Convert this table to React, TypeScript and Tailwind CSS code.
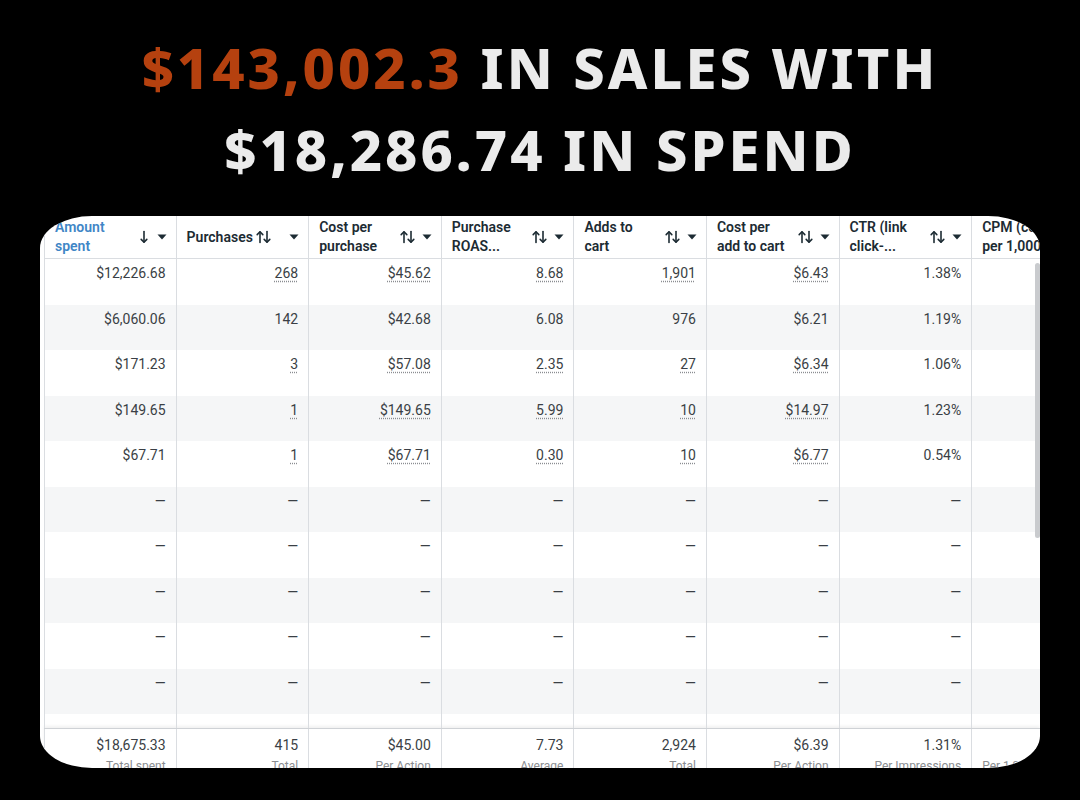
import React from 'react';

type Cell = { v: string; u?: boolean };

const columns = [
  { lines: ['Amount', 'spent'], active: true, inline: false },
  { lines: ['Purchases'], inline: true },
  { lines: ['Cost per', 'purchase'] },
  { lines: ['Purchase', 'ROAS...'] },
  { lines: ['Adds to', 'cart'] },
  { lines: ['Cost per', 'add to cart'] },
  { lines: ['CTR (link', 'click-...'] },
  { lines: ['CPM (cost', 'per 1,000...'], noIcons: true },
];

const c = (v: string, u = false): Cell => ({ v, u });

const rows: Cell[][] = [
  [c('$12,226.68'), c('268', true), c('$45.62', true), c('8.68', true), c('1,901', true), c('$6.43', true), c('1.38%'), c('')],
  [c('$6,060.06'), c('142'), c('$42.68'), c('6.08'), c('976'), c('$6.21'), c('1.19%'), c('')],
  [c('$171.23'), c('3', true), c('$57.08', true), c('2.35', true), c('27', true), c('$6.34', true), c('1.06%'), c('')],
  [c('$149.65'), c('1', true), c('$149.65', true), c('5.99', true), c('10', true), c('$14.97', true), c('1.23%'), c('')],
  [c('$67.71'), c('1', true), c('$67.71', true), c('0.30', true), c('10', true), c('$6.77', true), c('0.54%'), c('')],
  ...Array.from({ length: 5 }, () => [...Array(7).fill(c('—')), c('')]),
];

const footer = [
  ['$18,675.33', 'Total spent'],
  ['415', 'Total'],
  ['$45.00', 'Per Action'],
  ['7.73', 'Average'],
  ['2,924', 'Total'],
  ['$6.39', 'Per Action'],
  ['1.31%', 'Per Impressions'],
  ['', 'Per 1,000 Impressions'],
];

function SortArrows({ only }: { only?: boolean }) {
  return (
    <svg width="16" height="14" viewBox="0 0 16 14" fill="none" stroke="#1c2b33" strokeWidth="1.6" strokeLinecap="round" strokeLinejoin="round">
      {!only && (
        <>
          <path d="M4 12.5V2" />
          <path d="M1.2 4.6L4 1.8l2.8 2.8" />
        </>
      )}
      <path d="M11 1.5V12" />
      <path d="M8.2 9.4L11 12.2l2.8-2.8" />
    </svg>
  );
}

function Caret() {
  return (
    <svg width="10" height="6" viewBox="0 0 10 6">
      <path d="M0.5 0.5h9L5 5.5z" fill="#1c2b33" />
    </svg>
  );
}

const grid = 'grid grid-cols-[repeat(8,132.6px)]';

export default function App() {
  return (
    <div className="w-[1080px] h-[800px] bg-black overflow-hidden font-['Roboto',sans-serif]">
      <div className="h-[216px] flex flex-col items-center pt-[26px] font-['Noto_Sans',sans-serif] font-extrabold text-[56px] leading-[82px] tracking-[3px] text-[#ebebeb]">
        <div>
          <span className="text-[#b5410f]">$143,002.3</span> IN SALES WITH
        </div>
        <div>$18,286.74 IN SPEND</div>
      </div>

      <div className="relative ml-[40px] w-[1000px] h-[552px] bg-white rounded-[52px/32px] overflow-hidden pl-[4px]">
        {/* header */}
        <div className={`${grid} h-[43px] border-b border-[#dadde1]`}>
          {columns.map((col, i) => (
            <div
              key={i}
              className={`flex items-center pl-[10px] pr-[8px] border-r border-[#dadde1] ${i === 0 ? 'border-l' : ''}`}
            >
              <div
                className={`${col.inline ? '' : 'flex-1'} text-[14px] leading-[19px] font-semibold whitespace-nowrap ${
                  col.active ? 'text-[#3f86c6]' : 'text-[#1c2b33]'
                }`}
              >
                {col.lines.map((l) => (
                  <div key={l}>{l}</div>
                ))}
              </div>
              {!col.noIcons && (
                <>
                  <div className={`${col.inline ? 'ml-[3px] flex-1' : ''} ${col.active ? 'mr-[2px]' : ''}`}>
                    <SortArrows only={col.active} />
                  </div>
                  <div className="ml-[6px] mr-[1px]">
                    <Caret />
                  </div>
                </>
              )}
            </div>
          ))}
        </div>

        {/* body */}
        {rows.map((row, r) => (
          <div key={r} className={`${grid} h-[45.5px] ${r % 2 === 1 ? 'bg-[#f5f6f7]' : 'bg-white'}`}>
            {row.map((cell, i) => (
              <div
                key={i}
                className={`text-right pr-[10px] pt-[5px] text-[14px] leading-[18px] text-[#3a3f45] border-r border-[#dadde1] ${
                  i === 0 ? 'border-l' : ''
                }`}
              >
                <span className={cell.u ? 'underline decoration-dotted decoration-[#8a8d91] underline-offset-[3px]' : ''}>
                  {cell.v}
                </span>
              </div>
            ))}
          </div>
        ))}
        <div className={`${grid} h-[14px]`}>
          {columns.map((_, i) => (
            <div key={i} className={`border-r border-[#dadde1] ${i === 0 ? 'border-l' : ''}`} />
          ))}
        </div>

        {/* footer */}
        <div className={`${grid} border-t border-[#cfd2d6] shadow-[0_-2px_3px_rgba(0,0,0,0.06)]`}>
          {footer.map(([v, l], i) => (
            <div
              key={i}
              className={`text-right pr-[10px] pt-[7px] border-r border-[#dadde1] ${i === 0 ? 'border-l' : ''} ${
                i === 7 ? 'text-left pl-[10px]' : ''
              }`}
            >
              <div className="text-[14px] leading-[18px] text-[#3a3f45] h-[18px]">{v}</div>
              <div className="text-[12px] leading-[16px] text-[#8a8d91] mt-[4px] whitespace-nowrap">{l}</div>
            </div>
          ))}
        </div>

        {/* scrollbar */}
        <div className="absolute right-0 top-[47px] w-[5px] h-[275px] rounded-full bg-[#c9cbce]" />
      </div>
    </div>
  );
}
